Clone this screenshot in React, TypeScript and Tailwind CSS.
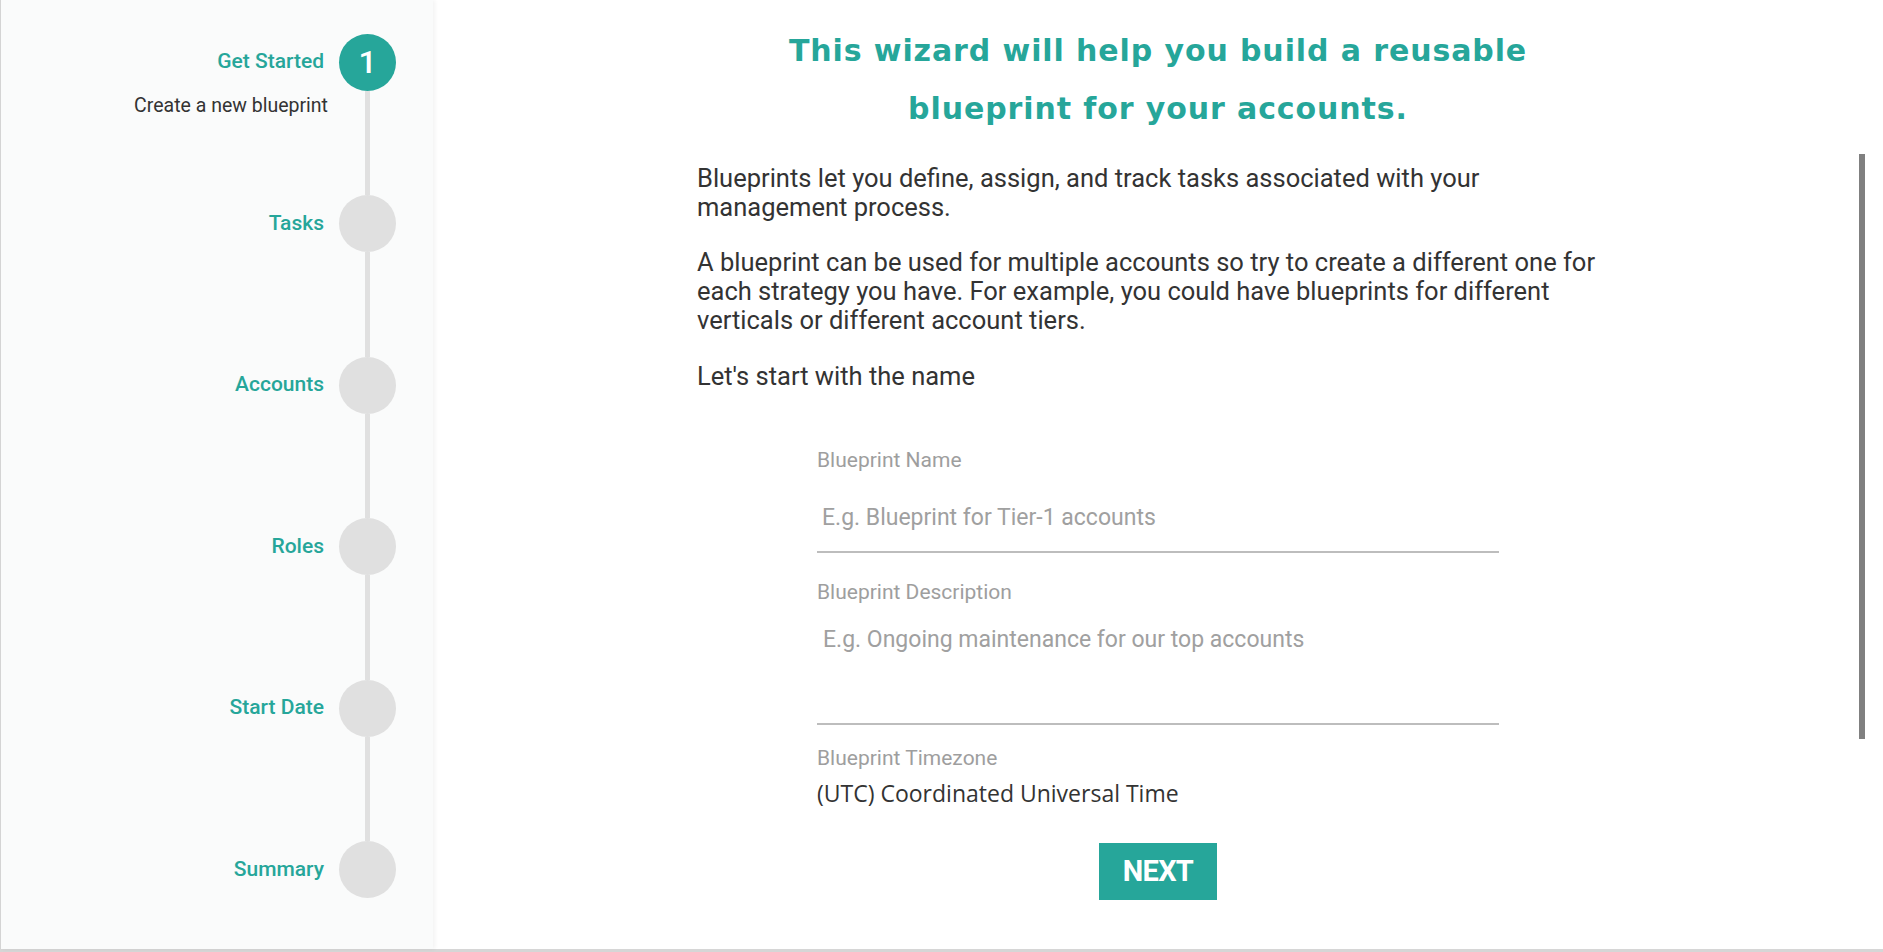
import { useState } from "react";

const steps = [
  { id: "start", title: "Get Started", subtitle: "Create a new blueprint" },
  { id: "tasks", title: "Tasks" },
  { id: "accounts", title: "Accounts" },
  { id: "roles", title: "Roles" },
  { id: "date", title: "Start Date" },
  { id: "summary", title: "Summary" },
];

function Step({
  title,
  subtitle,
  number,
  active,
  last,
}: {
  title: string;
  subtitle?: string;
  number: number;
  active: boolean;
  last: boolean;
}) {
  return (
    <div className={`flex ${last ? "h-[57px]" : "h-[161.5px]"}`}>
      <div className="flex-1 flex flex-col items-end pr-[15px]">
        <div className="h-[57px] flex items-center text-[21px] font-medium text-[#26a69a]">
          {title}
        </div>
        {subtitle && (
          <div className="mt-[3px] -mr-[4px] text-[19.5px] leading-[24px] text-[#333]">
            {subtitle}
          </div>
        )}
      </div>
      <div className="w-[57px] flex flex-col items-center">
        <div
          className={`w-[57px] h-[57px] shrink-0 rounded-full flex items-center justify-center text-[32px] font-medium text-white ${
            active ? "bg-[#26a69a]" : "bg-[#e0e0e0]"
          }`}
        >
          {active ? number : null}
        </div>
        {!last && <div className="w-[5px] flex-1 bg-[#e0e0e0]" />}
      </div>
    </div>
  );
}

export default function App() {
  const [current] = useState(0);
  const [name, setName] = useState("");
  const [description, setDescription] = useState("");

  return (
    <div className="h-[952px] w-full flex flex-col overflow-hidden bg-white font-['Roboto',sans-serif]">
      <div className="flex flex-1 min-h-0">
        {/* Sidebar steps */}
        <aside className="w-[433px] shrink-0 border-l border-[#d4d4d4] bg-[#fafbfb] shadow-[2px_0_4px_rgba(0,0,0,0.05)] pt-[33.5px] pr-[37px] z-10">
          {steps.map((step, i) => (
            <Step
              key={step.id}
              title={step.title}
              subtitle={step.subtitle}
              number={i + 1}
              active={i === current}
              last={i === steps.length - 1}
            />
          ))}
        </aside>

        {/* Main content */}
        <main className="relative flex-1 flex flex-col items-center">
          <h1 className="w-full pt-[22px] text-center font-['DejaVu_Sans',sans-serif] text-[30px] leading-[58px] font-bold tracking-[0.9px] text-[#26a69a]">
            This wizard will help you build a reusable
            <br />
            blueprint for your accounts.
          </h1>

          <div className="w-[922px] pr-[14px] mt-[26px] text-[25.5px] leading-[29px] text-[#333]">
            <p>
              Blueprints let you define, assign, and track tasks associated with your management
              process.
            </p>
            <p className="mt-[26px]">
              A blueprint can be used for multiple accounts so try to create a different one for
              each strategy you have. For example, you could have blueprints for different
              verticals or different account tiers.
            </p>
            <p className="mt-[27px]">Let's start with the name</p>
          </div>

          <form className="w-[682px] mt-[57px] flex flex-col" onSubmit={(e) => e.preventDefault()}>
            <label className="text-[21px] leading-[24px] text-[#9e9e9e]">Blueprint Name</label>
            <div className="mt-[32px] pb-[19px] border-b-2 border-[#bdbdbd]">
              <input
                value={name}
                onChange={(e) => setName(e.target.value)}
                placeholder="E.g. Blueprint for Tier-1 accounts"
                className="block w-full h-[28px] px-[5px] text-[23px] leading-[28px] text-[#333] placeholder:text-[#a0a0a0] outline-none bg-transparent"
              />
            </div>

            <label className="mt-[27px] text-[21px] leading-[24px] text-[#9e9e9e]">
              Blueprint Description
            </label>
            <div className="mt-[22px] pb-[69px] border-b-2 border-[#bdbdbd]">
              <textarea
                value={description}
                onChange={(e) => setDescription(e.target.value)}
                rows={1}
                placeholder="E.g. Ongoing maintenance for our top accounts"
                className="block w-full h-[28px] px-[6px] resize-none text-[23px] leading-[28px] text-[#333] placeholder:text-[#a0a0a0] outline-none bg-transparent"
              />
            </div>

            <label className="mt-[21px] text-[21px] leading-[24px] text-[#9e9e9e]">
              Blueprint Timezone
            </label>
            <div className="mt-[10px] font-['Open_Sans',sans-serif] text-[23px] leading-[26px] text-[#333]">
              (UTC) Coordinated Universal Time
            </div>

            <button
              type="submit"
              className="self-center mt-[37px] h-[57px] px-[24px] bg-[#26a69a] text-white text-[29px] font-bold tracking-tight"
            >
              NEXT
            </button>
          </form>

          {/* overlay scrollbar */}
          <div className="absolute right-[18px] top-[154px] w-[6px] h-[585px] bg-[#808080]" />
        </main>
      </div>
      <div className="h-[3px] shrink-0 bg-[#d6d6d6]" />
    </div>
  );
}
